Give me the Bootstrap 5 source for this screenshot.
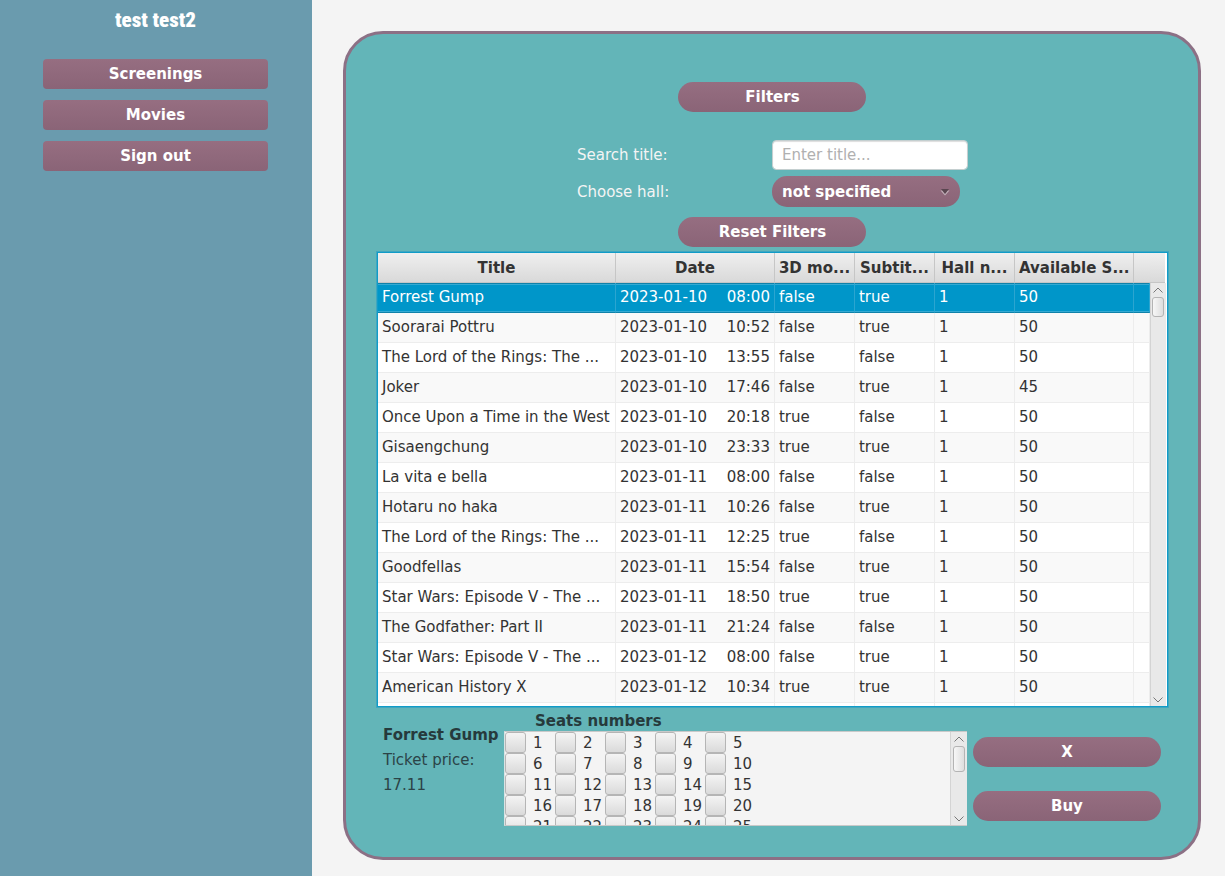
<!DOCTYPE html>
<html lang="en">
<head>
<meta charset="utf-8">
<meta name="viewport" content="width=device-width, initial-scale=1">
<title>Screenings</title>
<link href="https://cdn.jsdelivr.net/npm/bootstrap@5.3.0/dist/css/bootstrap.min.css" rel="stylesheet">
<style>
body { font: 15px/20px "DejaVu Sans", Verdana, sans-serif; color: #333; background: #f4f4f4; }
.side { width: 312px; background: #6a9bae; padding: 8px 44px 16px 43px; }
.user-name { font: 900 21px/24px "Roboto Condensed", Roboto, "Liberation Sans", sans-serif; color: #fff; margin-bottom: 27px; }
.side-nav { gap: 11px; }
.plum { --bs-btn-color: #fff; --bs-btn-hover-color: #fff; --bs-btn-active-color: #fff; height: 30px; padding: 0; border: 0; border-radius: 4px; color: #fff; font-size: 15px; line-height: 28px; font-weight: bold; background: linear-gradient(#966e81, #8a6477); }
.pill { width: 188px; border-radius: 15px; }
.stage { padding: 31px 24px 16px 31px; }
.panel { background: #63b5b8; border: 3px solid #8c7085; border-radius: 40px; padding: 48px 30px 31px 31px; }
.filter-form { width: 391px; margin: 28px 0 10px; row-gap: 6px; grid-template-columns: 1fr 196px; }
.filter-form label { color: #f4f4f4; }
.title-input { height: 30px; padding: 0 9px; border: 1px solid #c4cfd0; border-radius: 4px; font-size: 15px; line-height: 20px; box-shadow: inset 0 1px 1px #ddd; }
.title-input::placeholder { color: #b0b0b0; }
.hall-select { height: 31px; appearance: none; padding: 0 10px; }
.hall-arrow { right: 10px; top: 13px; pointer-events: none; }
.grid-box { margin-top: 5px; border: 1px solid #109cc8; box-shadow: 0 0 0 1px #3fa6c0; background: #fff; flex: 1 1 0; min-height: 300px; }
.scroller { overflow-y: auto; scrollbar-width: none; }
.scroller::-webkit-scrollbar { display: none; }
.shows { table-layout: fixed; width: 100%; border-collapse: separate; border-spacing: 0; }
.shows th, .shows td { height: 30px; padding: 0 4px; border-right: 1px solid #ededed; border-bottom: 1px solid #ededed; white-space: nowrap; overflow: hidden; line-height: 20px; }
.shows td { padding-bottom: 2px; }
.shows th { position: sticky; top: 0; text-align: center; font-weight: bold; border-color: #c6c6c6; }
.shows th, .corner { background: linear-gradient(#efefef, #d9d9d9); border-bottom: 1px solid #c6c6c6; }
.shows th:last-child { border-right: 0; }
.shows tbody tr:nth-child(even) { background: #f9f9f9; }
.shows tbody tr.picked { background: #0096c9; color: #fff; }
.shows tr.picked td { border-right-color: #2ba5d0; border-bottom-color: #0f82aa; box-shadow: inset 0 1px #0f82aa, inset 0 2px #35aad3, inset 0 -1px #35aad3; }
.corner { height: 30px; margin-right: 2px; }
.bar-v { width: 17px; padding: 4px 0 3px; background: #e9e9e9; border-left: 1px solid #d4d4d4; }
.grid-bar { width: 16px; margin-right: 1px; }
.thumb { width: 12px; height: 20px; margin-top: 4px; border: 1px solid #b4b4b4; border-radius: 3px; background: linear-gradient(90deg, #f7f7f7, #dedede); }
.thumb-tall { height: 26px; }
.booking { min-height: 119px; }
.picked-info { width: 127px; padding: 16px 0 0 6px; line-height: 25px; color: #2b4347; }
.picked-name, .seats-title { color: #263a3c; font-weight: bold; }
.seats-title { padding: 5px 0 0 31px; line-height: 19px; }
.seats { height: 95px; background: #f4f4f4; border: 1px solid #c9c9c9; border-right: 0; border-left-color: #d8e4e4; }
.seat-grid { display: grid; grid-template-columns: repeat(5, 50px); grid-auto-rows: 21px; }
.seat-box { appearance: none; width: 21px; height: 21px; margin: 0 7px 0 0; border: 1px solid #b5b5b5; border-radius: 3px; background: linear-gradient(#f4f4f4, #dadada); flex: none; }
.seat-box:checked { background: #956d80; }
.actions { padding: 30px 7px 0 6px; gap: 24px; }
</style>
</head>
<body>
<div class="d-flex min-vh-100">
  <aside class="side flex-shrink-0">
    <h1 class="user-name text-center">test test2</h1>
    <nav class="side-nav d-grid">
      <button type="button" class="btn plum">Screenings</button>
      <button type="button" class="btn plum">Movies</button>
      <button type="button" class="btn plum">Sign out</button>
    </nav>
  </aside>
  <main class="stage flex-grow-1 d-flex">
    <section class="panel flex-grow-1 d-flex flex-column">
      <button type="button" class="btn plum pill align-self-center">Filters</button>
      <form class="filter-form d-grid align-items-center align-self-center">
        <label for="title">Search title:</label>
        <input id="title" class="form-control title-input" type="text" placeholder="Enter title...">
        <label for="hall">Choose hall:</label>
        <div class="position-relative pill">
          <select id="hall" class="plum pill hall-select d-block"><option>not specified</option><option>1</option><option>2</option></select>
          <svg class="hall-arrow position-absolute" width="10" height="7" viewBox="0 0 10 7"><path d="M.5 1.500h9L5 6.500z" fill="#c3b0ba"/><path d="M1 0h8L5 5z" fill="#5a4650"/></svg>
        </div>
      </form>
      <button type="button" class="btn plum pill align-self-center">Reset Filters</button>

      <div class="grid-box d-flex">
        <div class="scroller flex-grow-1">
          <table class="shows">
            <colgroup><col><col style="width:159px"><col style="width:80px"><col style="width:80px"><col style="width:80px"><col style="width:119px"><col style="width:16px"></colgroup>
            <thead><tr><th>Title</th><th>Date</th><th>3D mo...</th><th>Subtit...</th><th>Hall n...</th><th>Available S...</th><th></th></tr></thead>
            <tbody id="shows"></tbody>
          </table>
        </div>
        <div class="d-flex flex-column">
          <div class="corner"></div>
          <div class="bar-v grid-bar flex-grow-1 d-flex flex-column align-items-center">
            <svg width="10" height="6" viewBox="0 0 10 6" fill="none" stroke="#777"><path d="M.5 5.500 5 1l4.500 4.500"/></svg>
            <div class="thumb"></div>
            <svg class="mt-auto" width="10" height="6" viewBox="0 0 10 6" fill="none" stroke="#777"><path d="M.5.5 5 5 9.500.5"/></svg>
          </div>
        </div>
      </div>

      <div class="booking d-flex">
        <div class="picked-info flex-shrink-0">
          <div class="picked-name text-nowrap">Forrest Gump</div>
          <div>Ticket price:</div>
          <div>17.11</div>
        </div>
        <div class="flex-grow-1">
          <div class="seats-title">Seats numbers</div>
          <div class="seats d-flex">
            <div class="scroller flex-grow-1"><div class="seat-grid" id="seats"></div></div>
            <div class="bar-v d-flex flex-column align-items-center">
              <svg width="10" height="6" viewBox="0 0 10 6" fill="none" stroke="#777"><path d="M.5 5.500 5 1l4.500 4.500"/></svg>
              <div class="thumb thumb-tall"></div>
              <svg class="mt-auto" width="10" height="6" viewBox="0 0 10 6" fill="none" stroke="#777"><path d="M.5.5 5 5 9.500.5"/></svg>
            </div>
          </div>
        </div>
        <div class="actions d-flex flex-column">
          <button type="button" class="btn plum pill">X</button>
          <button type="button" class="btn plum pill">Buy</button>
        </div>
      </div>
    </section>
  </main>
</div>
<script src="https://cdn.jsdelivr.net/npm/bootstrap@5.3.0/dist/js/bootstrap.bundle.min.js"></script>
<script>
const shows = [
  ["Forrest Gump", "2023-01-10", "08:00", "false", "true", "1", "50"],
  ["Soorarai Pottru", "2023-01-10", "10:52", "false", "true", "1", "50"],
  ["The Lord of the Rings: The ...", "2023-01-10", "13:55", "false", "false", "1", "50"],
  ["Joker", "2023-01-10", "17:46", "false", "true", "1", "45"],
  ["Once Upon a Time in the West", "2023-01-10", "20:18", "true", "false", "1", "50"],
  ["Gisaengchung", "2023-01-10", "23:33", "true", "true", "1", "50"],
  ["La vita e bella", "2023-01-11", "08:00", "false", "false", "1", "50"],
  ["Hotaru no haka", "2023-01-11", "10:26", "false", "true", "1", "50"],
  ["The Lord of the Rings: The ...", "2023-01-11", "12:25", "true", "false", "1", "50"],
  ["Goodfellas", "2023-01-11", "15:54", "false", "true", "1", "50"],
  ["Star Wars: Episode V - The ...", "2023-01-11", "18:50", "true", "true", "1", "50"],
  ["The Godfather: Part II", "2023-01-11", "21:24", "false", "false", "1", "50"],
  ["Star Wars: Episode V - The ...", "2023-01-12", "08:00", "false", "true", "1", "50"],
  ["American History X", "2023-01-12", "10:34", "true", "true", "1", "50"],
  ["", "", "", "", "", "", ""]
];
document.getElementById("shows").innerHTML = shows.map(([title, day, time, ...rest], i) =>
  `<tr${i ? "" : ' class="picked"'}><td>${title}</td><td><div class="d-flex justify-content-between"><span>${day}</span> <span>${time}</span></div></td>${rest.map(cell => `<td>${cell}</td>`).join("")}<td></td></tr>`).join("");
document.getElementById("seats").innerHTML = Array.from({ length: 25 }, (_, i) =>
  `<label class="d-flex align-items-center"><input type="checkbox" class="seat-box">${i + 1}</label>`).join("");
</script>
</body>
</html>
